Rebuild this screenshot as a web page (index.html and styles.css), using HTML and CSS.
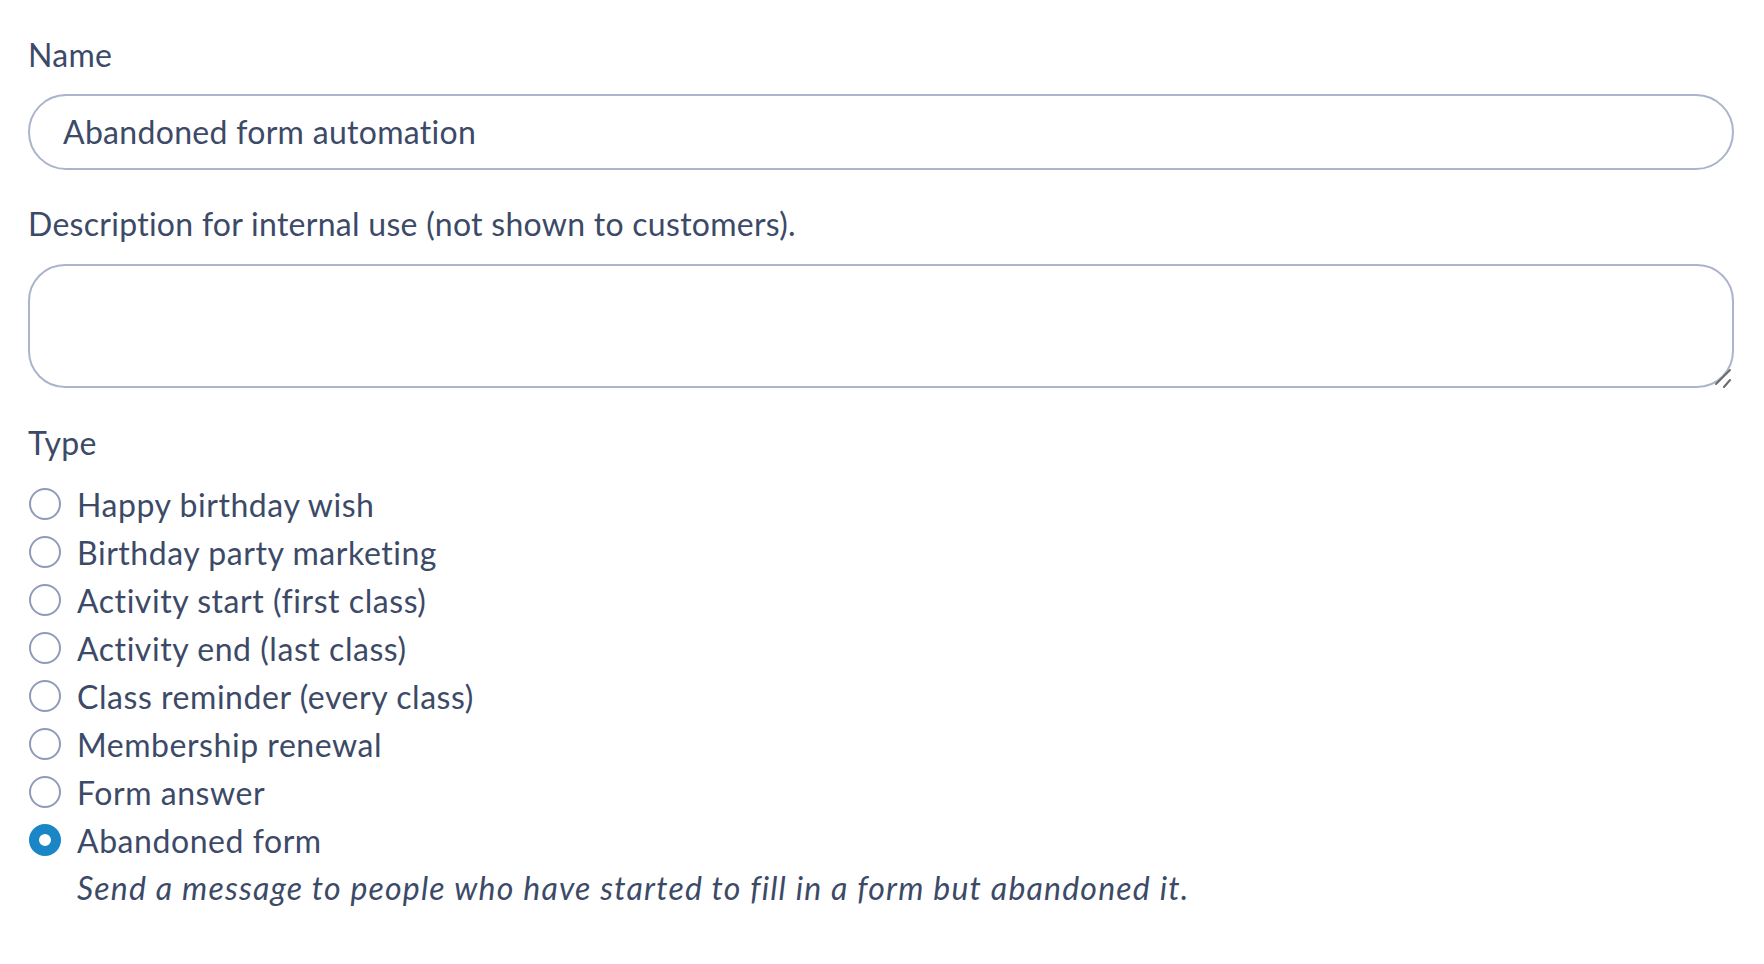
FILE: index.html
```html
<!DOCTYPE html>
<html lang="en">
<head>
<meta charset="utf-8">
<title>Automation</title>
<link rel="stylesheet" href="styles.css">
</head>
<body>
<form class="form">
  <div class="field name-field">
    <label class="label">Name</label>
    <div class="input">Abandoned form automation</div>
  </div>
  <div class="field">
    <label class="label">Description for internal use (not shown to customers).</label>
    <div class="textarea-wrap">
      <textarea class="textarea"></textarea>
      <svg class="resizer" width="20" height="20" viewBox="0 0 20 20" aria-hidden="true">
        <line x1="2" y1="16" x2="16" y2="2" />
        <line x1="10" y1="19" x2="16" y2="12" />
      </svg>
    </div>
  </div>
  <div class="field type-field">
    <div class="label">Type</div>
    <div class="radios">
      <label class="radio"><input type="radio" name="type"><span>Happy birthday wish</span></label>
      <label class="radio"><input type="radio" name="type"><span>Birthday party marketing</span></label>
      <label class="radio"><input type="radio" name="type"><span>Activity start (first class)</span></label>
      <label class="radio"><input type="radio" name="type"><span>Activity end (last class)</span></label>
      <label class="radio"><input type="radio" name="type"><span>Class reminder (every class)</span></label>
      <label class="radio"><input type="radio" name="type"><span>Membership renewal</span></label>
      <label class="radio"><input type="radio" name="type"><span>Form answer</span></label>
      <label class="radio"><input type="radio" name="type" checked><span>Abandoned form</span></label>
      <p class="hint">Send a message to people who have started to fill in a form but abandoned it.</p>
    </div>
  </div>
</form>
</body>
</html>
```
FILE: styles.css
```css
html, body {
  margin: 0;
  padding: 0;
  background: #ffffff;
}
body {
  font-family: Lato, "Noto Sans", sans-serif;
  font-size: 32px;
  color: #3c4a68;
}
.form {
  padding: 31px 30px 0 28px;
  display: flex;
  flex-direction: column;
  gap: 30px;
}
.field {
  display: flex;
  flex-direction: column;
  gap: 16px;
}
.name-field {
  gap: 15px;
}
.type-field {
  margin-top: 1px;
  gap: 13px;
}
.label {
  display: block;
  line-height: 48px;
  letter-spacing: 0.28px;
}
.input {
  height: 76px;
  box-sizing: border-box;
  border: 2px solid #aab4ca;
  border-radius: 38px;
  padding: 0 33px;
  display: flex;
  align-items: center;
  line-height: 38px;
  letter-spacing: 0.3px;
}
.textarea-wrap {
  position: relative;
  height: 124px;
}
.textarea {
  width: 100%;
  height: 124px;
  box-sizing: border-box;
  border: 2px solid #aab4ca;
  border-radius: 37px;
  padding: 18px 33px;
  font: inherit;
  color: inherit;
  outline: none;
  resize: none;
  margin: 0;
  display: block;
  background: #ffffff;
}
.resizer {
  position: absolute;
  right: 0;
  bottom: 0;
  stroke: #6a6a6a;
  stroke-width: 2;
  stroke-linecap: round;
}
.radios {
  display: flex;
  flex-direction: column;
}
.radio {
  display: flex;
  align-items: center;
  gap: 16px;
  height: 48px;
  letter-spacing: 0.55px;
}
.radio input {
  appearance: none;
  -webkit-appearance: none;
  margin: 0 0 0 1px;
  width: 32px;
  height: 32px;
  box-sizing: border-box;
  border: 2px solid #8f9cb8;
  border-radius: 50%;
  background: #ffffff;
  flex: none;
}
.radio input:checked {
  border: 10px solid #1a86c6;
  background: #ffffff;
}
.hint {
  margin: 0;
  padding-left: 49px;
  line-height: 48px;
  font-style: italic;
  letter-spacing: 1.2px;
}
```
